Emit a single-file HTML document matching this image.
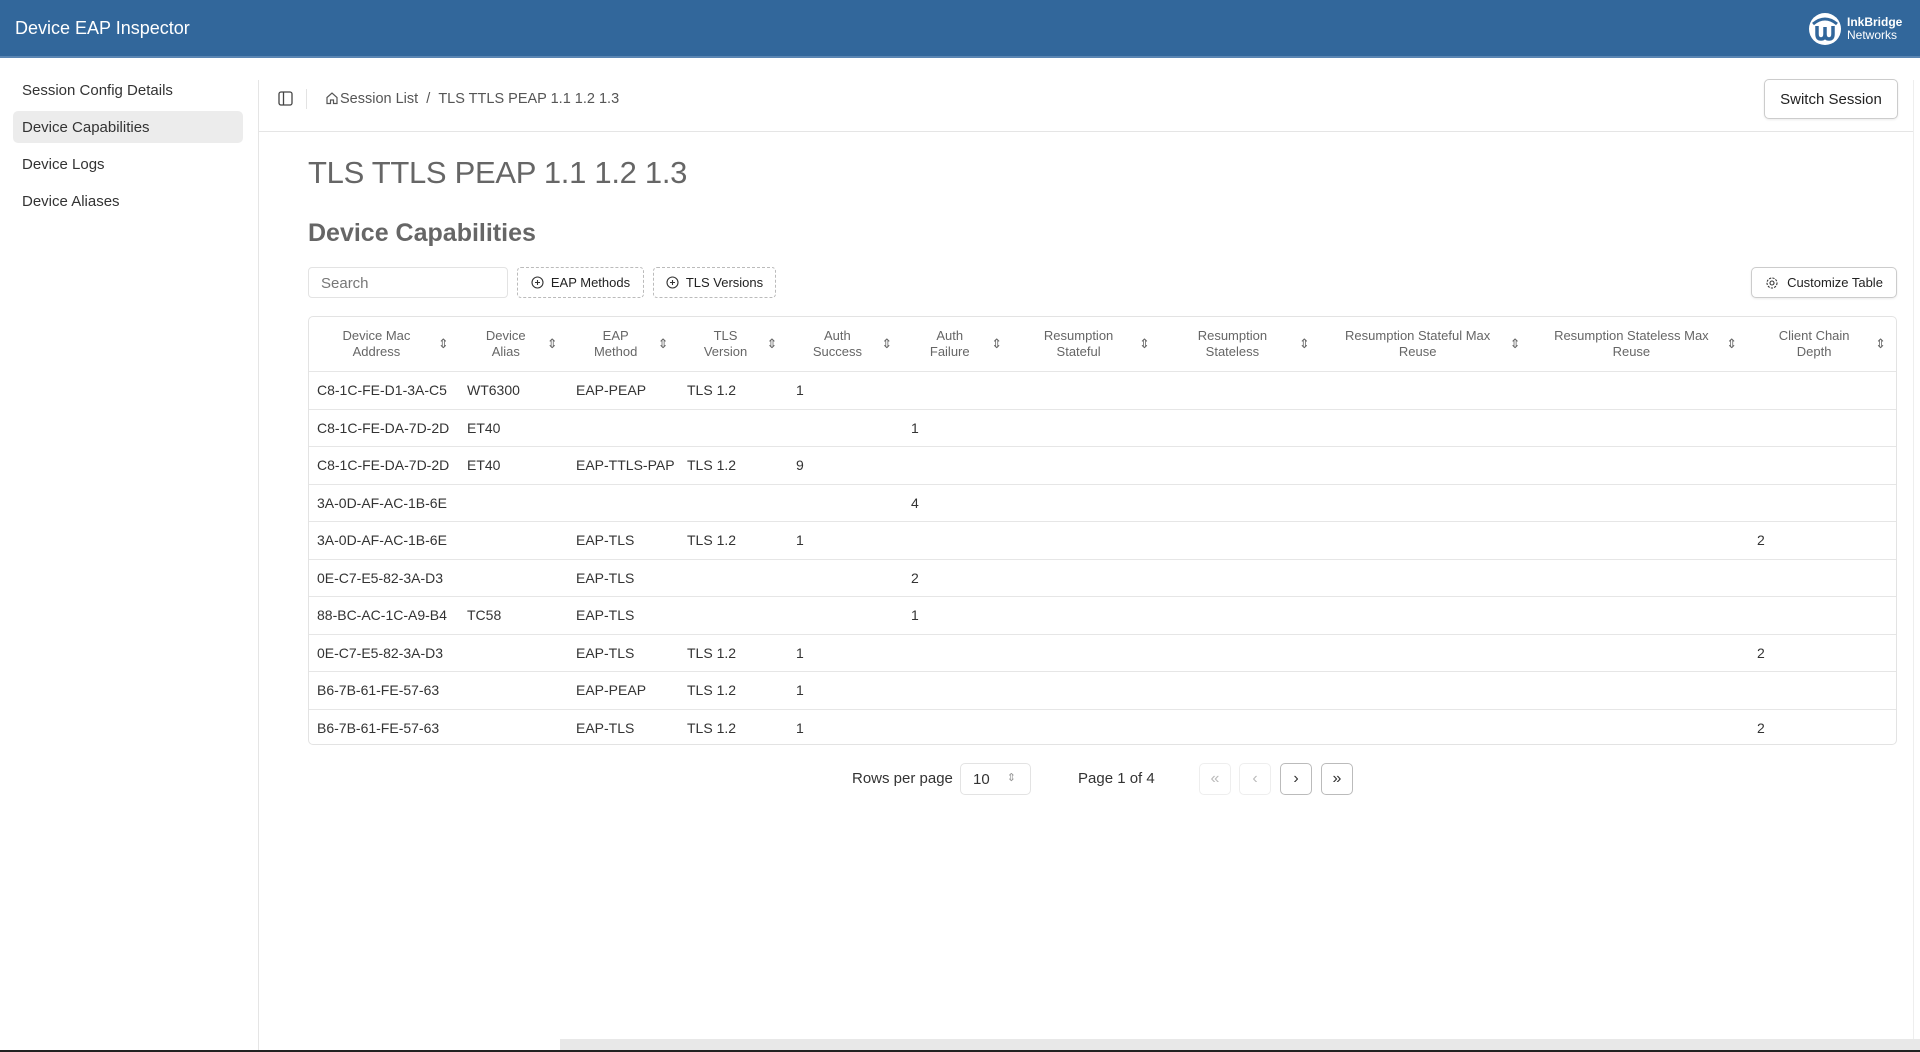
<!DOCTYPE html>
<html><head><meta charset="utf-8"><style>
*{box-sizing:border-box;margin:0;padding:0}
body{width:1920px;height:1052px;overflow:hidden;background:#fff;font-family:"Liberation Sans",sans-serif;color:#333;position:relative}
.hdr{position:absolute;left:0;top:0;width:1920px;height:58px;background:#32679b;border-bottom:2px solid #5b86b3}
.hdr .t{position:absolute;left:15px;top:18px;color:#fff;font-size:18px}
.logo{position:absolute;left:1808px;top:12px;display:flex;align-items:center;color:#fff}
.logo .l2{font-size:12px;line-height:13px;margin-left:5px}
.vline{position:absolute;left:258px;top:80px;width:1px;bottom:0;background:#e5e5e5}
.si{position:absolute;left:22px;font-size:15px;color:#333}
.act{position:absolute;left:13px;top:111px;width:230px;height:32px;background:#ececec;border-radius:5px}
.bc{position:absolute;left:259px;top:131px;width:1655px;height:1px;background:#e5e5e5}
.rline{position:absolute;left:1913px;top:80px;width:1px;height:960px;background:#eee}
.btn{position:absolute;border:1px solid #ccc;border-radius:5px;background:#fff;font-size:15px;color:#222;display:flex;align-items:center;justify-content:center;box-shadow:0 1px 2px rgba(0,0,0,.08)}
.dash{position:absolute;border:1px dashed #bbb;border-radius:4px;font-size:13px;color:#222;display:flex;align-items:center;justify-content:center;gap:7px}
h1{position:absolute;left:308px;top:155px;font-size:31px;font-weight:normal;color:#666;letter-spacing:-0.3px}
h2{position:absolute;left:308px;top:219px;font-size:25px;font-weight:bold;color:#666}
.tbl{position:absolute;left:308px;top:316px;width:1589px;height:429px;border:1px solid #e3e3e3;border-radius:5px;overflow:hidden}
.row{display:flex;height:37.5px;border-top:1px solid #e6e6e6;font-size:14px;color:#333;align-items:center}
.hrow{display:flex;height:54px;font-size:13px;color:#666}
.hc{display:flex;align-items:center;padding:0 10px 0 6px}
.hc span{flex:1;text-align:center;line-height:16px}
.c{padding-left:8px;white-space:nowrap}
.pg{position:absolute;border:1px solid #ddd;border-radius:5px;width:32px;height:32px;top:763px;display:flex;align-items:center;justify-content:center}
</style></head><body>
<div class="hdr"><div class="t">Device EAP Inspector</div>
<div class="logo"><svg width="34" height="34" viewBox="0 0 34 34"><circle cx="17" cy="17" r="16" fill="#fff"/><path d="M5 12 Q17 2 29 12" stroke="#32679b" stroke-width="3" fill="none"/><path d="M9 14 V22 Q9 27 13 27 Q17 27 17 22 V15 M17 22 Q17 27 21 27 Q25 27 25 22 V14" stroke="#32679b" stroke-width="3.5" fill="none"/></svg><div class="l2"><b>InkBridge</b><br>Networks</div></div></div>
<div class="act"></div>
<div class="si" style="top:82px">Session Config Details</div>
<div class="si" style="top:119px">Device Capabilities</div>
<div class="si" style="top:156px">Device Logs</div>
<div class="si" style="top:193px">Device Aliases</div>
<div class="vline"></div><div class="bc"></div><div class="rline"></div>
<svg style="position:absolute;left:278px;top:91px" width="15" height="15" viewBox="0 0 15 15"><rect x="1" y="1" width="13" height="13" rx="2" fill="none" stroke="#444" stroke-width="1.3"/><line x1="5.5" y1="1" x2="5.5" y2="14" stroke="#444" stroke-width="1.3"/></svg>
<div style="position:absolute;left:306px;top:89px;width:1px;height:20px;background:#e3e3e3"></div>
<svg style="position:absolute;left:325px;top:91px" width="14" height="14" viewBox="0 0 14 14"><path d="M2 6.5 L7 2 L12 6.5 V12.5 H8.5 V9 H5.5 V12.5 H2 Z" fill="none" stroke="#555" stroke-width="1.2"/></svg>
<div style="position:absolute;left:340px;top:91px;font-size:14.5px;color:#555">Session List&nbsp;&nbsp;/&nbsp;&nbsp;TLS TTLS PEAP 1.1 1.2 1.3</div>
<div class="btn" style="left:1764px;top:79px;width:134px;height:40px">Switch Session</div>
<h1>TLS TTLS PEAP 1.1 1.2 1.3</h1>
<h2>Device Capabilities</h2>
<div style="position:absolute;left:308px;top:267px;width:200px;height:31px;border:1px solid #e3e3e3;border-radius:4px;font-size:15px;color:#777;padding:7px 12px">Search</div>
<div class="dash" style="left:517px;top:267px;width:127px;height:31px"><svg width="13" height="13" viewBox="0 0 13 13"><circle cx="6.5" cy="6.5" r="5.5" fill="none" stroke="#333" stroke-width="1.1"/><path d="M6.5 4V9M4 6.5H9" stroke="#333" stroke-width="1.1"/></svg>EAP Methods</div>
<div class="dash" style="left:653px;top:267px;width:123px;height:31px"><svg width="13" height="13" viewBox="0 0 13 13"><circle cx="6.5" cy="6.5" r="5.5" fill="none" stroke="#333" stroke-width="1.1"/><path d="M6.5 4V9M4 6.5H9" stroke="#333" stroke-width="1.1"/></svg>TLS Versions</div>
<div class="btn" style="left:1751px;top:267px;width:146px;height:31px;font-size:13px;gap:8px"><svg width="14" height="14" viewBox="0 0 14 14"><circle cx="7" cy="7" r="2" fill="none" stroke="#333" stroke-width="1.1"/><circle cx="7" cy="7" r="5" fill="none" stroke="#333" stroke-width="1.1" stroke-dasharray="2.2 1.2"/></svg>Customize Table</div>
<div class="tbl">
<div class="hrow">
<div class="hc" style="width:150px"><span>Device Mac<br>Address</span>⇕</div>
<div class="hc" style="width:109px"><span>Device<br>Alias</span>⇕</div>
<div class="hc" style="width:111px"><span>EAP<br>Method</span>⇕</div>
<div class="hc" style="width:109px"><span>TLS<br>Version</span>⇕</div>
<div class="hc" style="width:115px"><span>Auth<br>Success</span>⇕</div>
<div class="hc" style="width:110px"><span>Auth<br>Failure</span>⇕</div>
<div class="hc" style="width:148px"><span>Resumption<br>Stateful</span>⇕</div>
<div class="hc" style="width:160px"><span>Resumption<br>Stateless</span>⇕</div>
<div class="hc" style="width:211px"><span>Resumption Stateful Max<br>Reuse</span>⇕</div>
<div class="hc" style="width:217px"><span>Resumption Stateless Max<br>Reuse</span>⇕</div>
<div class="hc" style="width:149px"><span>Client Chain<br>Depth</span>⇕</div>
</div>
<div id="rows"></div>
</div>
<script>
var d=[["C8-1C-FE-D1-3A-C5","WT6300","EAP-PEAP","TLS 1.2","1","",""],["C8-1C-FE-DA-7D-2D","ET40","","","","1",""],["C8-1C-FE-DA-7D-2D","ET40","EAP-TTLS-PAP","TLS 1.2","9","",""],["3A-0D-AF-AC-1B-6E","","","","","4",""],["3A-0D-AF-AC-1B-6E","","EAP-TLS","TLS 1.2","1","","2"],["0E-C7-E5-82-3A-D3","","EAP-TLS","","","2",""],["88-BC-AC-1C-A9-B4","TC58","EAP-TLS","","","1",""],["0E-C7-E5-82-3A-D3","","EAP-TLS","TLS 1.2","1","","2"],["B6-7B-61-FE-57-63","","EAP-PEAP","TLS 1.2","1","",""],["B6-7B-61-FE-57-63","","EAP-TLS","TLS 1.2","1","","2"]];
var w=[150,109,111,109,115,110,736];var h="";
d.forEach(function(r){h+='<div class="row">';for(var i=0;i<6;i++)h+='<div class="c" style="width:'+w[i]+'px">'+r[i]+'</div>';h+='<div style="width:736px"></div><div class="c">'+r[6]+'</div></div>';});
document.getElementById("rows").innerHTML=h;
</script>
<div style="position:absolute;left:852px;top:770px;font-size:15px;color:#333">Rows per page</div>
<div style="position:absolute;left:960px;top:763px;width:71px;height:32px;border:1px solid #e3e3e3;border-radius:5px;font-size:15px;padding:7px 12px">10<span style="position:absolute;right:14px;top:7px;font-size:11px;color:#999">⇕</span></div>
<div style="position:absolute;left:1078px;top:770px;font-size:15px;color:#333">Page 1 of 4</div>
<div class="pg" style="left:1199px;color:#bbb;border-color:#eee">«</div>
<div class="pg" style="left:1239px;color:#bbb;border-color:#eee">‹</div>
<div class="pg" style="left:1280px;border-color:#bbb">›</div>
<div class="pg" style="left:1321px;border-color:#bbb">»</div>
<div style="position:absolute;left:560px;top:1039px;width:1360px;height:11px;background:#e8e8e8"></div>
<div style="position:absolute;left:0;top:1050px;width:1920px;height:2px;background:#222"></div>
</body></html>
